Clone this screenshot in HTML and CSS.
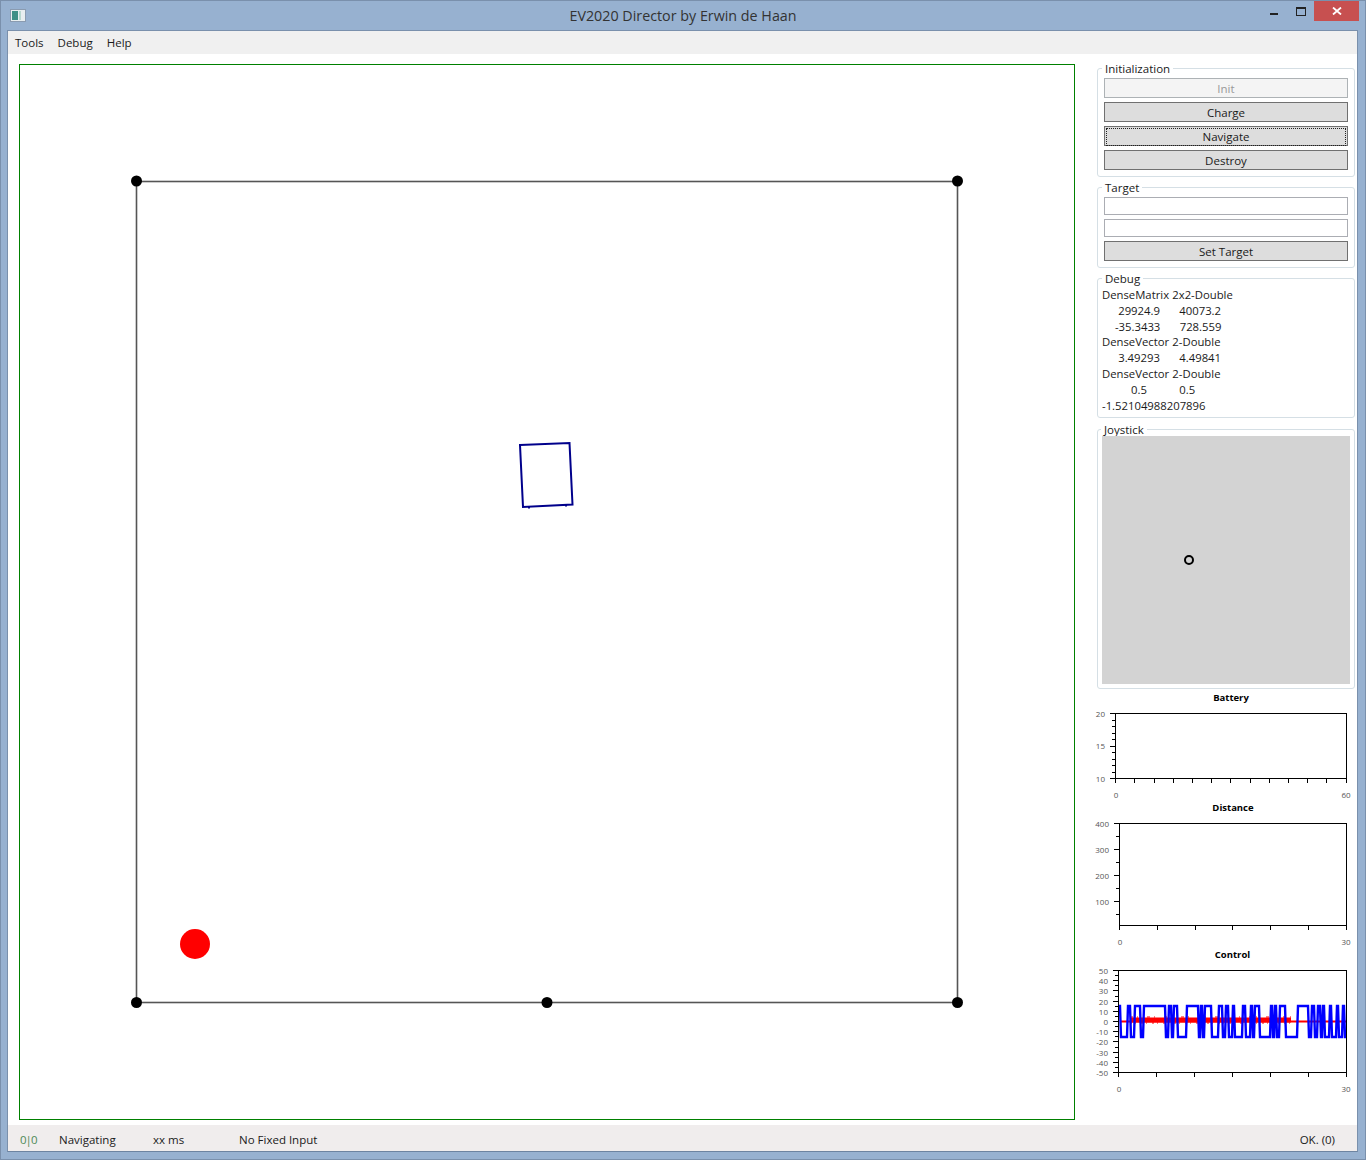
FILE: index.html
```html
<!DOCTYPE html>
<html lang="en">
<head>
    <meta charset="UTF-8">
    <title>EV2020 Director by Erwin de Haan</title>
    <link rel="stylesheet" href="styles.css">
</head>
<body>
<div class="window">
    <div class="titlebar">
        <svg class="app-icon" width="16" height="13" viewBox="0 0 16 13">
            <rect x="0.5" y="0.5" width="15" height="12" fill="#e8eef0" stroke="#8a9bb0"/>
            <rect x="2" y="2" width="6" height="9" fill="#3f8f86"/>
            <rect x="9" y="2" width="2" height="9" fill="#b8d8d0"/>
        </svg>
        <span class="title">EV2020 Director by Erwin de Haan</span>
        <span class="btn-min"></span>
        <span class="btn-max"></span>
        <span class="btn-close">
            <svg width="10" height="8" viewBox="0 0 10 8"><path d="M1 0.5L9 7.5M9 0.5L1 7.5" stroke="#fff" stroke-width="1.8" fill="none"/></svg>
        </span>
    </div>

    <div class="client">
        <div class="menu">
            <span class="menu-item">Tools</span>
            <span class="menu-item">Debug</span>
            <span class="menu-item">Help</span>
        </div>

        <div class="main">
            <div class="canvas">
                <svg class="arena" width="1054" height="1054" viewBox="20 65 1054 1054">
                    <rect x="136.5" y="181.5" width="821" height="821" fill="none" stroke="#555" stroke-width="1.6"/>
                    <circle cx="136.5" cy="181" r="5.5"/>
                    <circle cx="957.5" cy="181" r="5.5"/>
                    <circle cx="136.5" cy="1002.5" r="5.5"/>
                    <circle cx="547" cy="1002.5" r="5.5"/>
                    <circle cx="957.5" cy="1002.5" r="5.5"/>
                    <circle cx="195" cy="944" r="15" fill="#f00"/>
                    <path d="M520 445L569.5 443L572.5 504.5L523 507Z" fill="none" stroke="#00008b" stroke-width="2"/>
                    <path d="M529 507L529 508.5M566 505L566 506.5" stroke="#00008b" stroke-width="2"/>
                </svg>
            </div>

            <div class="side">
                <fieldset class="group group-init">
                    <legend>Initialization</legend>
                    <button class="btn" disabled>Init</button>
                    <button class="btn">Charge</button>
                    <button class="btn btn-focus"><span>Navigate</span></button>
                    <button class="btn">Destroy</button>
                </fieldset>

                <fieldset class="group group-target">
                    <legend>Target</legend>
                    <input class="field" type="text">
                    <input class="field" type="text">
                    <button class="btn">Set Target</button>
                </fieldset>

                <fieldset class="group group-debug">
                    <legend>Debug</legend>
<pre class="debug">DenseMatrix 2x2-Double
     29924.9      40073.2
    -35.3433      728.559
DenseVector 2-Double
     3.49293      4.49841
DenseVector 2-Double
         0.5          0.5
-1.52104988207896</pre>
                </fieldset>

                <fieldset class="group group-joy">
                    <legend>Joystick</legend>
                    <div class="joy">
                        <span class="knob"></span>
                    </div>
                </fieldset>

                <svg class="chart chart-battery" width="268" height="112" viewBox="1090 690 268 112">
                    <text class="chart-title" x="1231" y="697">Battery</text>
                    <rect class="axis" x="1115.5" y="713.5" width="231" height="65"/>
                    <path class="axis" d="M1110 713.5H1115M1112 720.5H1115M1112 726.5H1115M1112 733.5H1115M1112 739.5H1115M1110 746.5H1115M1112 752.5H1115M1112 759.5H1115M1112 765.5H1115M1112 772.5H1115M1110 778.5H1115"/>
                    <path class="axis" d="M1115.5 779V783M1134.5 779V783M1154.5 779V783M1173.5 779V783M1192.5 779V783M1211.5 779V783M1230.5 779V783M1250.5 779V783M1269.5 779V783M1288.5 779V783M1307.5 779V783M1326.5 779V783M1346.5 779V783"/>
                    <text class="tick-y" x="1105" y="713">20</text>
                    <text class="tick-y" x="1105" y="745">15</text>
                    <text class="tick-y" x="1105" y="778">10</text>
                    <text class="tick-x" x="1116" y="794">0</text>
                    <text class="tick-x" x="1346" y="794">60</text>
                </svg>

                <svg class="chart chart-distance" width="268" height="148" viewBox="1090 802 268 148">
                    <text class="chart-title" x="1233" y="807">Distance</text>
                    <rect class="axis" x="1119.5" y="823.5" width="227" height="102"/>
                    <path class="axis" d="M1114 823.5H1119M1116 836.5H1119M1114 849.5H1119M1116 862.5H1119M1114 875.5H1119M1116 888.5H1119M1114 901.5H1119M1116 914.5H1119"/>
                    <path class="axis" d="M1119.5 926V930M1157.5 926V930M1195.5 926V930M1232.5 926V930M1270.5 926V930M1308.5 926V930M1346.5 926V930"/>
                    <text class="tick-y" x="1109" y="823">400</text>
                    <text class="tick-y" x="1109" y="849">300</text>
                    <text class="tick-y" x="1109" y="875">200</text>
                    <text class="tick-y" x="1109" y="901">100</text>
                    <text class="tick-x" x="1120" y="941">0</text>
                    <text class="tick-x" x="1346" y="941">30</text>
                </svg>

                <svg class="chart chart-control" width="268" height="150" viewBox="1090 950 268 150">
                    <text class="chart-title" x="1232.5" y="954">Control</text>
                    <path class="line-red" d="M1121 1021.5H1346"/>
                    <path class="band-red" d="M1130 1020H1291"/>
                    <path class="noise-red" d="M1130 1023H1291"/>
                    <path class="noise-red-top" d="M1130 1017H1291"/>
                    <path class="line-blue" d="M1119 1006H1120L1121 1037H1127L1128 1006H1130L1131 1037H1134L1135 1006H1140L1141 1037H1143L1144 1006H1165L1166 1037H1168L1169 1006H1171L1172 1037H1173L1174 1006H1177L1178 1037H1186L1187 1006H1198L1199 1037H1200L1201 1006H1202L1203 1037H1204L1205 1006H1211L1212 1037H1218L1219 1006H1222L1223 1037H1225L1226 1006H1228L1229 1037H1232L1233 1006H1234L1235 1037H1242L1243 1006H1245L1246 1037H1250L1251 1006H1252L1253 1037H1254L1255 1006H1259L1260 1037H1270L1271 1006H1272L1273 1037H1274L1275 1006H1276L1277 1037H1279L1280 1006H1285L1286 1037H1297L1298 1006H1308L1309 1037H1311L1312 1006H1314L1315 1037H1317L1318 1006H1320L1321 1037H1322L1323 1006H1324L1325 1037H1329L1330 1006H1331L1332 1037H1336L1337 1006H1338L1339 1037H1342L1343 1006H1344L1345 1037H1346"/>
                    <rect class="axis" x="1118.5" y="970.5" width="228" height="102"/>
                    <path class="axis" d="M1113 970.5H1118M1115 975.5H1118M1113 980.5H1118M1115 985.5H1118M1113 990.5H1118M1115 996.5H1118M1113 1001.5H1118M1115 1006.5H1118M1113 1011.5H1118M1115 1016.5H1118M1113 1021.5H1118M1115 1026.5H1118M1113 1031.5H1118M1115 1036.5H1118M1113 1041.5H1118M1115 1047.5H1118M1113 1052.5H1118M1115 1057.5H1118M1113 1062.5H1118M1115 1067.5H1118M1113 1072.5H1118"/>
                    <path class="axis" d="M1118.5 1073V1077M1156.5 1073V1077M1194.5 1073V1077M1232.5 1073V1077M1270.5 1073V1077M1308.5 1073V1077M1346.5 1073V1077"/>
                    <text class="tick-y" x="1108" y="970">50</text>
                    <text class="tick-y" x="1108" y="980">40</text>
                    <text class="tick-y" x="1108" y="990">30</text>
                    <text class="tick-y" x="1108" y="1001">20</text>
                    <text class="tick-y" x="1108" y="1011">10</text>
                    <text class="tick-y" x="1108" y="1021">0</text>
                    <text class="tick-y" x="1108" y="1031">-10</text>
                    <text class="tick-y" x="1108" y="1041">-20</text>
                    <text class="tick-y" x="1108" y="1052">-30</text>
                    <text class="tick-y" x="1108" y="1062">-40</text>
                    <text class="tick-y" x="1108" y="1072">-50</text>
                    <text class="tick-x" x="1119" y="1088">0</text>
                    <text class="tick-x" x="1346" y="1088">30</text>
                </svg>
            </div>
        </div>

        <div class="status">
            <span class="st-count">0|0</span>
            <span class="st-state">Navigating</span>
            <span class="st-time">xx ms</span>
            <span class="st-input">No Fixed Input</span>
            <span class="st-ok">OK. (0)</span>
        </div>
    </div>
</div>
</body>
</html>
```

FILE: styles.css
```css
html, body {
    margin: 0;
    padding: 0;
}
body {
    font-family: "Open Sans", "Noto Sans", sans-serif;
    font-size: 11px;
    color: #1a1a1a;
}
.window {
    width: 1366px;
    height: 1160px;
    box-sizing: border-box;
    background-color: #97b1d0;
    border: 1px solid #7a90ac;
    display: flex;
    flex-direction: column;
}

/* title bar */
.titlebar {
    height: 29px;
    flex: none;
    display: flex;
    position: relative;
    font-size: 14.3px;
    color: #333;
}
.app-icon {
    position: absolute;
    left: 9px;
    top: 8px;
}
.title {
    position: absolute;
    left: 0;
    right: 0;
    top: 5px;
    text-align: center;
    line-height: 20px;
}
.btn-min {
    position: absolute;
    left: 1269px;
    top: 12px;
    width: 8px;
    height: 2px;
    background-color: #222;
}
.btn-max {
    position: absolute;
    left: 1295px;
    top: 6px;
    width: 8px;
    height: 6px;
    border: 1px solid #222;
    border-top-width: 2px;
}
.btn-close {
    position: absolute;
    left: 1313px;
    top: 0;
    width: 45px;
    height: 20px;
    background-color: #c75050;
    display: flex;
    align-items: center;
    justify-content: center;
}

/* client area */
.client {
    margin: 0 7px 7px 6px;
    flex: 1;
    min-height: 0;
    display: flex;
    flex-direction: column;
    background-color: #fff;
    border: 1px solid #7a90ac;
    border-bottom: 1px solid #6d84a1;
}
.menu {
    height: 23px;
    flex: none;
    background-color: #f0f0f0;
    display: flex;
    align-items: center;
    padding-left: 7px;
    font-size: 11.5px;
}
.menu-item {
    margin-right: 14px;
}
.main {
    flex: 1;
    min-height: 0;
    display: flex;
    align-items: flex-start;
    padding: 10px 0 0 11px;
}
.canvas {
    width: 1054px;
    height: 1054px;
    border: 1px solid #008000;
    flex: none;
}
.arena {
    display: block;
}

/* right column */
.side {
    margin-left: 22px;
    margin-top: -3px;
    width: 258px;
    flex: none;
}
.group {
    margin: 0;
    padding: 0 6px;
    border: 1px solid #d5dfe5;
    border-radius: 3px;
    box-sizing: border-box;
    min-width: 0;
}
.group legend {
    padding: 0 3px;
    margin-left: -2px;
    line-height: 15px;
    font-size: 11.5px;
}
.group-init {
    height: 116px;
    padding-top: 2px;
}
.group-target {
    height: 88px;
    margin-top: 3px;
    padding-top: 2px;
}
.group-debug {
    height: 147px;
    margin-top: 3px;
    padding-top: 1px;
}
.group-joy {
    height: 267px;
    margin-top: 4px;
    padding: 0 4px;
}
.group-joy legend {
    margin-left: -1px;
}
.btn {
    display: block;
    width: 244px;
    height: 20px;
    padding: 0;
    margin: 0 0 4px 0;
    border: 1px solid #707070;
    border-radius: 0;
    background-color: #ddd;
    font-family: inherit;
    font-size: 11.5px;
    color: #1a1a1a;
    position: relative;
}
.btn[disabled] {
    background-color: #f4f4f4;
    border-color: #adb2b5;
    color: #999;
}
.btn-focus span {
    display: block;
    margin: 1px;
    height: 16px;
    line-height: 16px;
    border: 1px dotted #222;
}
.field {
    display: block;
    box-sizing: border-box;
    width: 244px;
    height: 18px;
    margin: 0 0 4px 0;
    border: 1px solid #abadb3;
    padding: 0;
    background-color: #fff;
}
.debug {
    margin: 0 0 0 -2px;
    font-family: inherit;
    font-size: 11.3px;
    line-height: 15.8px;
    word-spacing: 0.3px;
}
.joy {
    width: 248px;
    height: 248px;
    background-color: #d3d3d3;
    margin-top: -1px;
    position: relative;
}
.knob {
    position: absolute;
    left: 82px;
    top: 119px;
    width: 6px;
    height: 6px;
    border: 2px solid #000;
    border-radius: 50%;
}

/* charts */
.chart {
    display: block;
    margin-left: -7px;
    overflow: visible;
}
.chart-battery {
    margin-top: 1px;
}
.chart-title {
    font-size: 9.5px;
    font-weight: 700;
    text-anchor: middle;
    dominant-baseline: central;
    fill: #000;
}
.axis {
    fill: none;
    stroke: #000;
    stroke-width: 1;
    shape-rendering: crispEdges;
}
.tick-y, .tick-x {
    font-size: 8px;
    fill: #555;
    dominant-baseline: central;
}
.tick-y {
    text-anchor: end;
}
.tick-x {
    text-anchor: middle;
}
.line-blue {
    fill: none;
    stroke: #00f;
    stroke-width: 2.4;
}
.line-red {
    fill: none;
    stroke: #f00;
    stroke-width: 2;
}
.band-red {
    fill: none;
    stroke: #f00;
    stroke-width: 5;
}
.noise-red {
    fill: none;
    stroke: #f00;
    stroke-width: 1;
    stroke-dasharray: 2 3 1 5;
}
.noise-red-top {
    fill: none;
    stroke: #f00;
    stroke-width: 1;
    stroke-dasharray: 3 4 1 9;
}

/* status bar */
.status {
    height: 26px;
    flex: none;
    box-sizing: border-box;
    padding: 2px 0 0 12px;
    background-color: #f0eded;
    display: flex;
    align-items: center;
    font-size: 11.5px;
}
.st-count {
    color: #4d8a55;
    width: 39px;
    letter-spacing: -1px;
}
.st-state {
    width: 94px;
}
.st-time {
    width: 86px;
}
.st-ok {
    margin-left: auto;
    margin-right: 22px;
}
```
